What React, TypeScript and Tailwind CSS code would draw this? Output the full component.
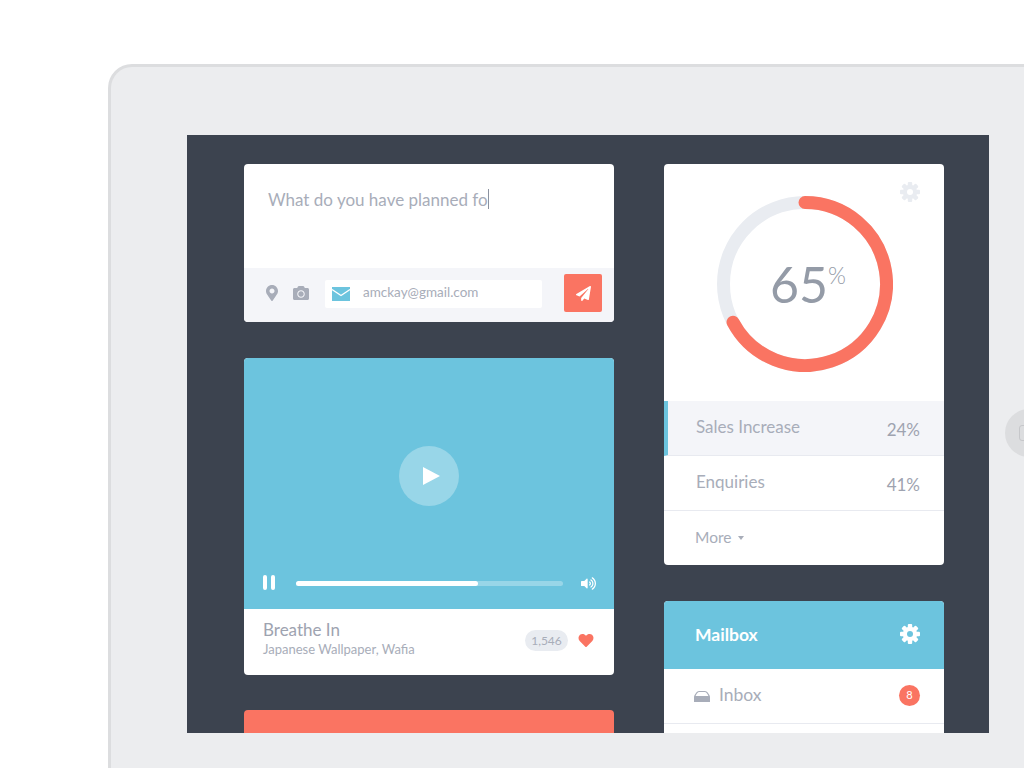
import { FaCamera, FaHeart, FaMapMarkerAlt, FaPaperPlane, FaVolumeUp } from "react-icons/fa";

function GearIcon({ className }: { className?: string }) {
  return (
    <svg viewBox="0 0 20 20" className={className} aria-hidden="true">
      <g fill="currentColor">
        {[0, 45, 90, 135].map((deg) => (
          <rect key={deg} x="7.8" y="0" width="4.4" height="20" rx="1" transform={`rotate(${deg} 10 10)`} />
        ))}
      </g>
      <path
        fill="currentColor"
        fillRule="evenodd"
        d="M10 2.8 a7.2 7.2 0 1 0 0 14.4 a7.2 7.2 0 1 0 0 -14.4 Z M10 7 a3 3 0 1 1 0 6 a3 3 0 1 1 0 -6 Z"
      />
      <circle cx="10" cy="10" r="3" fill="var(--hole)" />
    </svg>
  );
}

function MailIcon() {
  return (
    <svg width="18" height="14" viewBox="0 0 18 14" aria-hidden="true">
      <rect width="18" height="14" fill="#6cc4de" />
      <path d="M0 2.5 L9 8.5 L18 2.5" fill="none" stroke="#fff" strokeWidth="1.4" />
    </svg>
  );
}

function InboxIcon() {
  return (
    <svg width="16" height="11" viewBox="0 0 16 11" aria-hidden="true">
      <path d="M5 0 H11 C13 0 15 3 16 5.5 V11 H0 V5.5 C1 3 3 0 5 0 Z" fill="#a8adb9" />
      <path d="M5.2 1 H10.8 C12.2 1 13.6 3.2 14.4 5 H1.6 C2.4 3.2 3.8 1 5.2 1 Z" fill="#fff" />
    </svg>
  );
}

function Ring() {
  return (
    <div className="relative ml-[53px] mt-8 h-[176px] w-[176px]">
      <svg width="176" height="176" viewBox="0 0 176 176" aria-hidden="true">
        <circle cx="88" cy="88" r="81.5" fill="none" stroke="#e9ecf1" strokeWidth="13" />
        <path
          d="M88 6.5 A81.5 81.5 0 1 1 16.04 126.26"
          fill="none"
          stroke="#fa7462"
          strokeWidth="13"
          strokeLinecap="round"
        />
      </svg>
      <div className="absolute inset-0 flex items-center justify-center pl-[6px] text-[#949ba7]">
        <span className="text-[50px] leading-none">65</span>
        <span className="mb-[18px] text-[23px] font-light leading-none">%</span>
      </div>
    </div>
  );
}

function StatRow({ label, value, active }: { label: string; value: string; active?: boolean }) {
  return (
    <div
      className={
        active
          ? "flex h-[55px] items-center justify-between border-b border-l-4 border-b-[#e8eaf0] border-l-[#6cc4de] bg-[#f4f5f9] pl-7 pr-6"
          : "flex h-[55px] items-center justify-between border-b border-b-[#e8eaf0] pl-8 pr-6"
      }
    >
      <span className="mb-[3px] text-[17px] text-[#a8adb9]">{label}</span>
      <span className="mt-[4px] text-[17px] text-[#9ea3b0]">{value}</span>
    </div>
  );
}

export default function App() {
  return (
    <div className="h-[768px] w-[1024px] overflow-hidden bg-white pl-[108px] pt-16 font-['Lato',sans-serif]">
      <div className="flex h-[720px] w-[1000px] items-start rounded-tl-[24px] border-l-[3px] border-t-[3px] border-[#dcdddf] bg-[#ecedef] pl-[76px] pt-[68px]">
        <main className="flex h-[598px] w-[802px] shrink-0 gap-[50px] overflow-hidden bg-[#3c434f] pl-[57px] pt-[29px]">
          <div className="flex w-[370px] shrink-0 flex-col">
            <section className="shrink-0 overflow-hidden rounded-[4px] bg-white">
              <div className="flex h-[104px] items-start px-6 pt-[23px]">
                <span className="text-[17px] leading-[26px] text-[#a8adb9]">What do you have planned fo</span>
                <span className="mt-[2px] h-[20px] w-px bg-[#8b92a0]" />
              </div>
              <div className="flex h-[54px] items-center bg-[#f4f5f9] pb-1 pl-[22px] pr-3">
                <FaMapMarkerAlt className="h-[16px] w-[12px] text-[#a8adb9]" />
                <FaCamera className="ml-[14px] h-[16px] w-[18px] text-[#a8adb9]" />
                <div className="ml-[15px] mt-[2px] flex h-[28px] w-[217px] items-center rounded-[2px] bg-white pl-[7px]">
                  <MailIcon />
                  <span className="mb-[3px] ml-[13px] text-[13.5px] text-[#a8adb9]">amckay@gmail.com</span>
                </div>
                <button className="ml-auto flex h-[38px] w-[38px] items-center justify-center rounded-[2px] bg-[#fa7462]">
                  <FaPaperPlane className="h-[15px] w-[15px] text-white" />
                </button>
              </div>
            </section>
            <section className="mt-[36px] shrink-0 overflow-hidden rounded-[4px] bg-white">
              <div className="flex h-[251px] flex-col bg-[#6cc4de]">
                <div className="flex flex-1 items-center justify-center pt-[18px]">
                  <div className="flex h-[60px] w-[60px] items-center justify-center rounded-full bg-white/30">
                    <svg width="17" height="18" viewBox="0 0 17 18" className="ml-[4px]" aria-hidden="true">
                      <path d="M0 0 L17 9 L0 18 Z" fill="#fff" />
                    </svg>
                  </div>
                </div>
                <div className="flex h-[34px] shrink-0 items-start pl-[19px]">
                  <div className="flex gap-1">
                    <span className="h-[15px] w-[4px] rounded-[2px] bg-white" />
                    <span className="h-[15px] w-[4px] rounded-[2px] bg-white" />
                  </div>
                  <div className="ml-[21px] mt-[6px] h-[5px] w-[267px] rounded-full bg-white/30">
                    <div className="h-full w-[182px] rounded-full bg-white" />
                  </div>
                  <FaVolumeUp className="ml-[18px] mt-[1px] h-[15px] w-[15px] text-white" />
                </div>
              </div>
              <div className="flex h-[66px] items-center pl-[19px] pr-[20px]">
                <div className="mb-[6px] flex flex-col">
                  <span className="text-[17px] leading-[20px] text-[#9ea3b0]">Breathe In</span>
                  <span className="text-[13px] leading-[18px] text-[#a8adb9]">Japanese Wallpaper, Wafia</span>
                </div>
                <span className="mb-[3px] ml-auto flex h-[21px] w-[43px] items-center justify-center rounded-full bg-[#e9ecf1] text-[12px] text-[#a8adb9]">
                  1,546
                </span>
                <FaHeart className="mb-[3px] ml-[10px] h-[15px] w-[16px] text-[#fa7462]" />
              </div>
            </section>
            <section className="mt-[35px] h-[120px] shrink-0 rounded-[4px] bg-[#fa7462]" />
          </div>
          <div className="flex w-[280px] shrink-0 flex-col gap-[36px]">
            <section className="shrink-0 overflow-hidden rounded-[4px] bg-white">
              <div className="relative h-[237px] overflow-hidden">
                <Ring />
                <GearIcon className="absolute right-[24px] top-[18px] h-[20px] w-[20px] text-[#e9ecf1] [--hole:#fff]" />
              </div>
              <StatRow label="Sales Increase" value="24%" active />
              <StatRow label="Enquiries" value="41%" />
              <div className="flex h-[54px] items-center pb-px pl-[31px]">
                <span className="text-[15.5px] text-[#a8adb9]">More</span>
                <span className="ml-[7px] h-0 w-0 border-x-[3px] border-t-[4px] border-x-transparent border-t-[#a8adb9]" />
              </div>
            </section>
            <section className="shrink-0 overflow-hidden rounded-[4px] bg-white">
              <div className="flex h-[68px] items-center justify-between bg-[#6cc4de] pl-[31px] pr-6">
                <span className="text-[17.5px] font-bold text-white">Mailbox</span>
                <GearIcon className="mb-[2px] h-[20px] w-[20px] text-white [--hole:#6cc4de]" />
              </div>
              <div className="flex h-[55px] items-center border-b border-b-[#e8eaf0] pl-[30px] pr-6">
                <InboxIcon />
                <span className="mb-[2px] ml-[9px] text-[17.5px] text-[#a8adb9]">Inbox</span>
                <span className="mb-[2px] ml-auto flex h-[21px] w-[21px] items-center justify-center rounded-full bg-[#fa7462] text-[11px] text-white">
                  8
                </span>
              </div>
              <div className="h-[55px]" />
            </section>
          </div>
        </main>
        <div className="ml-4 mt-[274px] flex h-[48px] w-[48px] shrink-0 items-center rounded-full bg-[#dcdddf] pl-[14px]">
          <span className="h-[16px] w-[16px] rounded-[3px] border border-[#c6c7ca]" />
        </div>
      </div>
    </div>
  );
}
